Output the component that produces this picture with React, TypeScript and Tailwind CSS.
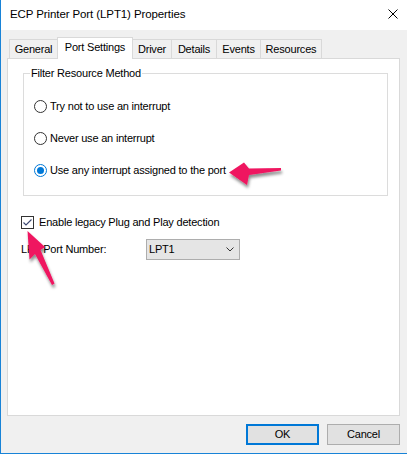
import React from 'react';

const tabs = [
  { label: 'General', cls: 'w-[48px] h-[20px] border-l border-t border-b' },
  { label: 'Port Settings', cls: 'w-[76px] h-[22px] border-l border-t border-r bg-white', active: true },
  { label: 'Driver', cls: 'w-[39px] h-[20px] border-t border-r border-b' },
  { label: 'Details', cls: 'w-[45px] h-[20px] border-t border-r border-b' },
  { label: 'Events', cls: 'w-[44px] h-[20px] border-t border-r border-b' },
  { label: 'Resources', cls: 'w-[61px] h-[20px] border-t border-r border-b' },
];

const radios = [
  { label: 'Try not to use an interrupt', checked: false },
  { label: 'Never use an interrupt', checked: false },
  { label: 'Use any interrupt assigned to the port', checked: true },
];

const Radio: React.FC<{ checked: boolean }> = ({ checked }) => (
  <span
    className={`flex h-[13px] w-[13px] items-center justify-center rounded-full border bg-white ${
      checked ? 'border-[#0078d7]' : 'border-[#333333]'
    }`}
  >
    {checked && <span className="h-[7px] w-[7px] rounded-full bg-[#0078d7]" />}
  </span>
);

const Arrows: React.FC = () => (
  <svg className="pointer-events-none absolute inset-0" width="407" height="455" viewBox="0 0 407 455">
    <defs>
      <filter id="shadow" x="-20%" y="-20%" width="160%" height="160%">
        <feDropShadow dx="1" dy="3" stdDeviation="1.4" floodColor="#000" floodOpacity="0.45" />
      </filter>
    </defs>
    <g fill="#ef1560" filter="url(#shadow)">
      <polygon points="228,172.5 243,162.5 248,168.5 280,168 280,170.5 248,175 246,185" />
      <polygon points="26.5,231 44,247 39.5,250 53.5,283.5 51,285 34,254 28.5,259.5" />
    </g>
  </svg>
);

export default function App() {
  return (
    <div className="relative flex h-[454px] w-[407px] flex-col overflow-hidden border-b border-l border-[#1883d7] bg-[#f0f0f0] font-['Liberation_Sans',Arial,sans-serif] text-[11px] tracking-[-0.2px] text-black">
      {/* title bar */}
      <div className="flex h-[30px] items-center justify-between bg-white pl-[9px] pr-[9px]">
        <span className="text-[11.5px] tracking-[-0.1px]">ECP Printer Port (LPT1) Properties</span>
        <svg width="10" height="10" viewBox="0 0 10 10" className="mb-[2px]">
          <path d="M0.5 0.5 L9.5 9.5 M9.5 0.5 L0.5 9.5" stroke="#000" strokeWidth="1" />
        </svg>
      </div>

      {/* tabs */}
      <div className="relative z-10 -mb-px mt-[7px] flex h-[22px] items-end pl-[8px]">
        {tabs.map((t) => (
          <div
            key={t.label}
            className={`flex items-center justify-center border-[#d9d9d9] ${t.cls} ${t.active ? 'pb-[2px]' : ''}`}
          >
            {t.label}
          </div>
        ))}
      </div>

      {/* panel */}
      <div className="ml-[6px] mr-[7px] h-[358px] border border-[#d9d9d9] bg-white">
        <div className="relative ml-[15px] mt-[14px] h-[123px] w-[365px] border border-[#dcdcdc]">
          <span className="absolute -top-[8px] left-[6px] bg-white px-[1px] leading-[14px]">
            Filter Resource Method
          </span>
          <div className="flex flex-col gap-[16px] pl-[10px] pt-[24px]">
            {radios.map((r) => (
              <div key={r.label} className="flex h-[16px] items-center gap-[3px]">
                <Radio checked={r.checked} />
                <span>{r.label}</span>
              </div>
            ))}
          </div>
        </div>

        <div className="ml-[13px] mt-[20px] flex h-[13px] items-center gap-[5px]">
          <span className="flex h-[13px] w-[13px] items-center justify-center border border-[#333333] bg-white">
            <svg width="11" height="11" viewBox="0 0 11 11">
              <path d="M1.5 5.5 L4 8 L9.5 2.5" fill="none" stroke="#3a4670" strokeWidth="1.1" />
            </svg>
          </span>
          <span>Enable legacy Plug and Play detection</span>
        </div>

        <div className="ml-[13px] mt-[10px] flex h-[21px] items-center">
          <span className="w-[125px]">LPT Port Number:</span>
          <div className="flex h-[21px] w-[94px] items-center justify-between border border-[#adadad] bg-[#e5e5e5] pl-[2px] pr-[5px]">
            <span>LPT1</span>
            <svg width="8" height="5" viewBox="0 0 8 5">
              <path d="M0.5 0.5 L4 4 L7.5 0.5" fill="none" stroke="#333" strokeWidth="1" />
            </svg>
          </div>
        </div>
      </div>

      {/* buttons */}
      <div className="mt-[8px] flex justify-end gap-[8px] pr-[7px]">
        <button className="flex h-[21px] w-[73px] items-center justify-center border-2 border-[#0078d7] bg-[#e1e1e1]">
          OK
        </button>
        <button className="flex h-[21px] w-[73px] items-center justify-center border border-[#adadad] bg-[#e1e1e1]">
          Cancel
        </button>
      </div>

      <Arrows />
    </div>
  );
}
